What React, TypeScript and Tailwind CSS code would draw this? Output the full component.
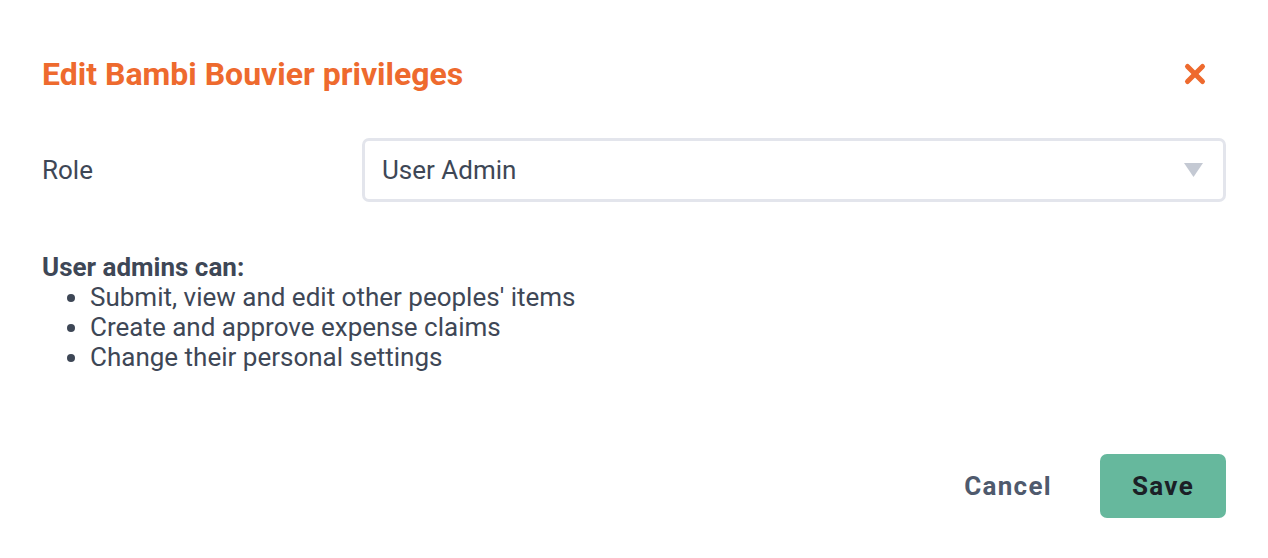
import { X } from "lucide-react";

const perms = [
  "Submit, view and edit other peoples' items",
  "Create and approve expense claims",
  "Change their personal settings",
];

export default function App() {
  return (
    <div
      className="flex h-[558px] w-full flex-col bg-white px-[42px] text-[#3e4756]"
      style={{ fontFamily: "Roboto, 'Liberation Sans', sans-serif" }}
    >
      {/* Header */}
      <div className="flex items-center justify-between pt-[54px]">
        <h2 className="text-[32px] font-bold leading-[40px] text-[#ee6a2e]">
          Edit Bambi Bouvier privileges
        </h2>
        <button className="mr-[16px] text-[#ee6a2e]">
          <X size={30} strokeWidth={4} />
        </button>
      </div>

      {/* Role */}
      <div className="mt-[44px] flex items-center">
        <label className="w-[320px] text-[26px] leading-[32px]">Role</label>
        <div className="flex h-[64px] flex-1 items-center justify-between rounded-[7px] border-[3px] border-[#e3e5ec] pl-[17px] pr-[20px]">
          <span className="text-[26px] leading-[32px]">User Admin</span>
          <svg width="19" height="14" viewBox="0 0 19 14">
            <path d="M0 0 H19 L9.5 14 Z" fill="#c4c9d3" />
          </svg>
        </div>
      </div>

      {/* Permissions */}
      <div className="mt-[50px] text-[26px] leading-[30px]">
        <p className="font-bold">User admins can:</p>
        <ul className="list-disc pl-[48px]">
          {perms.map((p) => (
            <li key={p}>{p}</li>
          ))}
        </ul>
      </div>

      {/* Footer */}
      <div className="mt-auto mb-[40px] flex items-center justify-end gap-[48px]">
        <button className="text-[26px] font-bold tracking-[1.3px] text-[#4f5a6d]">Cancel</button>
        <button className="h-[64px] w-[126px] rounded-[7px] bg-[#66b89d] text-[26px] font-bold tracking-[1.3px] text-[#1b2026]">
          Save
        </button>
      </div>
    </div>
  );
}
